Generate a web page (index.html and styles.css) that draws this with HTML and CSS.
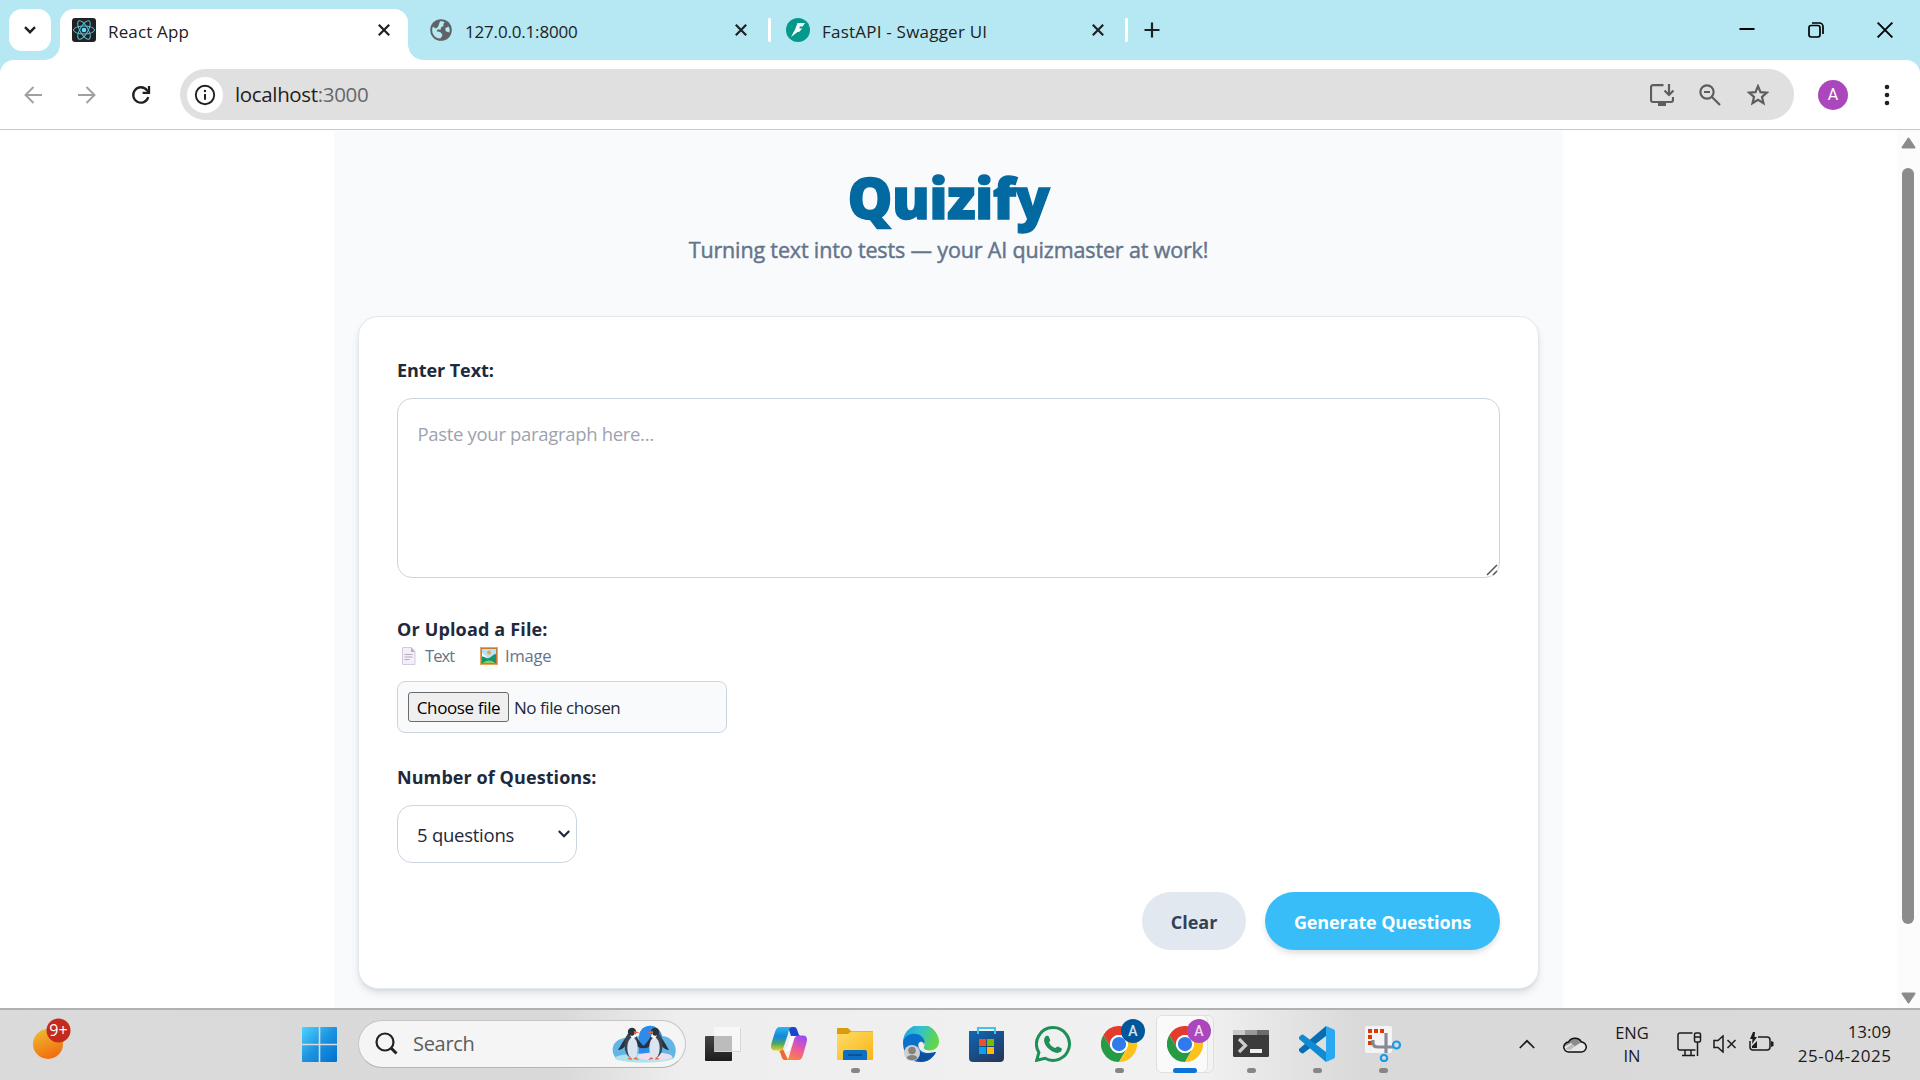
FILE: index.html
```html
<!DOCTYPE html>
<html lang="en">
<head>
<meta charset="utf-8">
<title>React App</title>
<link rel="stylesheet" href="styles.css">
</head>
<body>
<div class="screen">
  <header class="tabstrip">
    <button class="tab-search" aria-label="Search tabs"><svg width="12" height="8" viewBox="0 0 12 8"><path d="M1 1.2l5 5 5-5" fill="none" stroke="#1f2023" stroke-width="2.4"/></svg></button>
    <div class="tab tab-active">
      <svg class="fav" width="24" height="24" viewBox="0 0 24 24"><rect width="24" height="24" rx="3" fill="#222"/><g fill="none" stroke="#57c4dc" stroke-width="1"><ellipse cx="12" cy="12" rx="10.5" ry="4"/><ellipse cx="12" cy="12" rx="10.5" ry="4" transform="rotate(60 12 12)"/><ellipse cx="12" cy="12" rx="10.5" ry="4" transform="rotate(120 12 12)"/></g><circle cx="12" cy="12" r="2.3" fill="#61dafb"/></svg>
      <span class="tab-title"><span class="t t-react">React App</span></span>
      <svg class="x" width="12" height="12" viewBox="0 0 12 12"><path d="M.8.8l10.4 10.4M11.2.8L.8 11.2"/></svg>
    </div>
    <div class="tab tab-local">
      <svg class="fav" width="24" height="24" viewBox="0 0 24 24"><circle cx="12" cy="12" r="10.8" fill="#5f6368"/><path d="M11 3.2c2.2 0 3.6.4 4.6 1L14.4 6v2.3l-2.2.6-.4 2.5H8.6L7.5 13.3l3.6.7 2.3 2.4-.5 2.2-1.6 1.9C6 20.3 3.2 16.5 3.2 12c0-1.2.2-2.2.6-3.2l3.4 1.8 2-2.2z" fill="#b5e9f3"/><path d="M19.5 8.5l-3.3 1.8.5 3 3.6 1.3c.7-2.3.3-4.6-.8-6.1z" fill="#b5e9f3"/></svg>
      <span class="tab-title"><span class="t t-ip">127.0.0.1:8000</span></span>
      <svg class="x" width="12" height="12" viewBox="0 0 12 12"><path d="M.8.8l10.4 10.4M11.2.8L.8 11.2"/></svg>
    </div>
    <i class="tab-divider"></i>
    <div class="tab tab-fast">
      <svg class="fav" width="24" height="24" viewBox="0 0 24 24"><circle cx="12" cy="12" r="12" fill="#05998b"/><path d="M11.5 5H19l-2.4 3.6h-2.8l-.4 1.8h2.9l-3 3.4-1.8.2L5 19l4.3-8z" fill="#fff"/></svg>
      <span class="tab-title"><span class="t t-fast">FastAPI - Swagger UI</span></span>
      <svg class="x" width="12" height="12" viewBox="0 0 12 12"><path d="M.8.8l10.4 10.4M11.2.8L.8 11.2"/></svg>
    </div>
    <i class="tab-divider"></i>
    <svg class="plus" width="16" height="16" viewBox="0 0 16 16"><path d="M8 .5v15M.5 8h15" stroke="#1f2023" stroke-width="2.2"/></svg>
    <div class="window-controls">
      <svg width="16" height="16" viewBox="0 0 16 16"><path d="M.5 7h15" stroke="#000" stroke-width="2"/></svg>
      <svg width="16" height="16" viewBox="0 0 16 16"><g fill="none" stroke="#000" stroke-width="1.7"><rect x="1" y="3.5" width="11" height="11.5" rx="2.2"/><path d="M4 1h7.300a3.700 3.700 0 0 1 3.700 3.700V12"/></g></svg>
      <svg width="16" height="16" viewBox="0 0 16 16"><path d="M.6.6l14.8 14.8M15.4.6L.6 15.4" stroke="#000" stroke-width="1.9"/></svg>
    </div>
  </header>

  <nav class="toolbar">
    <svg width="18" height="18" viewBox="0 0 18 18"><path d="M18 9H1.5M9.5 1L1.5 9l8 8" fill="none" stroke="#a0a0a0" stroke-width="1.9"/></svg>
    <svg width="18" height="18" viewBox="0 0 18 18"><path d="M0 9h16.5M8.5 1l8 8-8 8" fill="none" stroke="#a0a0a0" stroke-width="1.9"/></svg>
    <svg width="20" height="20" viewBox="0 0 20 20"><path d="M17.3 12.2A7.700 7.700 0 1 1 16 5.200l1.800 1.800" fill="none" stroke="#1f2023" stroke-width="2.3"/><path d="M11.6 7.900H18V1" fill="none" stroke="#1f2023" stroke-width="2.3"/></svg>
    <div class="omnibox">
      <span class="site-info"><svg width="22" height="22" viewBox="0 0 22 22"><circle cx="11" cy="11" r="9.200" fill="none" stroke="#1f2023" stroke-width="1.900"/><path d="M11 10v5.800" stroke="#1f2023" stroke-width="2"/><circle cx="11" cy="7" r="1.200" fill="#1f2023"/></svg></span>
      <span class="url"><span class="t t-url">localhost<span class="port">:3000</span></span></span>
      <svg width="24" height="22" viewBox="0 0 24 22"><g fill="none" stroke="#5b5d5f" stroke-width="2.2"><path d="M13.5 1.100H3a2 2 0 0 0-2 2v12.900a2 2 0 0 0 2 2h18a2 2 0 0 0 2-2v-3"/><path d="M19 0v11M14.500 6.500L19 11l4.500-4.500"/></g><path d="M8 18h8v4H8z" fill="#5b5d5f"/></svg>
      <svg width="22" height="22" viewBox="0 0 22 22"><g fill="none" stroke="#5b5d5f" stroke-width="2.2"><circle cx="8" cy="8" r="6.600"/><path d="M13 13l8 8M5 8h6"/></g></svg>
      <svg width="22" height="22" viewBox="0 0 22 22"><path d="M11 2.200l2.500 6 6.400.5-4.900 4.200 1.500 6.300-5.500-3.400-5.500 3.400L7 12.900 2.100 8.700l6.400-.5z" fill="none" stroke="#5b5d5f" stroke-width="2.200"/></svg>
    </div>
    <span class="avatar">A</span>
    <svg width="6" height="22" viewBox="0 0 6 22"><g fill="#1f2023"><circle cx="3" cy="3" r="2.300"/><circle cx="3" cy="11" r="2.300"/><circle cx="3" cy="19" r="2.300"/></g></svg>
  </nav>

  <div class="viewport">
    <main class="app">
      <h1><span class="t t-h1">Quizify</span></h1>
      <p class="tagline"><span class="t t-tag">Turning text into tests — your AI quizmaster at work!</span></p>
      <form class="card">
        <label class="lbl"><span class="t t-l1">Enter Text:</span></label>
        <div class="area">
          <textarea placeholder="Paste your paragraph here..."></textarea>
          <svg class="grip" width="12" height="12" viewBox="0 0 12 12"><path d="M1 11L11 1M7 11l4-4" stroke="#555" stroke-width="1.500"/></svg>
        </div>
        <label class="lbl lbl-file"><span class="t t-l2">Or Upload a File:</span></label>
        <div class="hints">
          <svg width="15" height="18" viewBox="0 0 15 18"><path d="M1.500.5h9L14 4.500v13H1.500z" fill="#f3eef8" stroke="#d3cbdc"/><path d="M10 .5v4.500h4z" fill="#b9aec6"/><path d="M3.500 7.500h8M3.500 10h8M3.500 12.500h5" stroke="#b5abc1"/></svg>
          <span class="t t-text">Text</span>
          <svg class="pic" width="18" height="18" viewBox="0 0 18 18"><path d="M0 0h18v18H0z" fill="#eba55c"/><path d="M1 1h16v16H1z" fill="#c57a35"/><path d="M2 2h14v14H2z" fill="#b7e1fb"/><circle cx="9" cy="5.500" r="2" fill="#f4a62a"/><path d="M2 6l4 3 2 4H2z" fill="#f5fbff"/><path d="M2 9.500c3 0 4 2.500 7 1.500s4-4 7-4v9H2z" fill="#15946f"/><path d="M3 16c3-3.500 9-3.500 12 0z" fill="#8fce52"/></svg>
          <span class="t t-image">Image</span>
        </div>
        <div class="file"><button type="button"><span class="t t-choose">Choose file</span></button><span class="t t-nofile">No file chosen</span></div>
        <label class="lbl lbl-num"><span class="t t-l3">Number of Questions:</span></label>
        <div class="select"><span class="t t-sel">5 questions</span><svg width="12" height="8" viewBox="0 0 12 8"><path d="M.8 1l5.200 5.200L11.200 1" fill="none" stroke="#1e293b" stroke-width="2.200"/></svg></div>
        <div class="actions">
          <button type="button" class="btn clear"><span class="t t-clear">Clear</span></button>
          <button type="button" class="btn generate"><span class="t t-gen">Generate Questions</span></button>
        </div>
      </form>
    </main>
    <div class="scrollbar">
      <svg width="15" height="12" viewBox="0 0 15 12"><path d="M7.500 1.500L13.500 10.500h-12z" fill="#8b8b8b" stroke="#8b8b8b" stroke-width="2" stroke-linejoin="round"/></svg>
      <i class="thumb"></i>
      <svg width="15" height="12" viewBox="0 0 15 12"><path d="M7.500 10.500L1.500 1.500h12z" fill="#8b8b8b" stroke="#8b8b8b" stroke-width="2" stroke-linejoin="round"/></svg>
    </div>
  </div>

  <footer class="taskbar">
    <div class="widget"><svg width="40" height="42" viewBox="0 0 40 42"><defs><linearGradient id="sun" x1=".2" y1="0" x2=".6" y2="1"><stop offset="0" stop-color="#eebb31"/><stop offset="1" stop-color="#f26b0c"/></linearGradient></defs><circle cx="16" cy="26" r="15" fill="url(#sun)"/><circle cx="26.500" cy="12.500" r="12" fill="#c42b1c"/></svg><b class="badge">9+</b></div>
    <svg class="start" width="35" height="35" viewBox="0 0 35 35"><defs><linearGradient id="win" gradientUnits="userSpaceOnUse" x1="0" y1="0" x2="35" y2="35"><stop offset="0" stop-color="#4fd3ff"/><stop offset=".5" stop-color="#1c93e0"/><stop offset="1" stop-color="#0070d0"/></linearGradient></defs><path d="M1 0h15.700v16.700H0V1a1 1 0 0 1 1-1zM18.300 0H34a1 1 0 0 1 1 1v15.700H18.300zM0 18.300h16.700V35H1a1 1 0 0 1-1-1zM18.300 18.300H35V34a1 1 0 0 1-1 1H18.300z" fill="url(#win)"/></svg>
    <div class="search">
      <svg width="24" height="24" viewBox="0 0 24 24"><circle cx="11" cy="10" r="8.500" fill="none" stroke="#222" stroke-width="2.200"/><path d="M17 16l5.500 5.500" stroke="#222" stroke-width="3"/></svg>
      <span class="t t-search">Search</span>
      <svg class="penguins" width="64" height="38" viewBox="0 0 64 38"><path d="M5 34C-3 27 1 16 9 14c7-3 13-1 18-3C29-2 46-3 50 11c13 1 17 15 11 23z" fill="#62b5e4"/><path d="M27 11C29-2 46-3 50 11v20H27z" fill="#2f8be8"/><ellipse cx="32" cy="33" rx="29" ry="4.500" fill="#aee3ee"/><ellipse cx="43" cy="31.500" rx="17" ry="4" fill="#eedff0"/>
        <g><path d="M15 11c-4 5-6 9-9 14 4 0 7-3 9-7z" fill="#29323f"/><path d="M24 11c3 5 5 8 9 11-4 3-8 0-10-5z" fill="#29323f"/><ellipse cx="19" cy="20" rx="6.500" ry="12.500" fill="#3a4452"/><ellipse cx="20.500" cy="23" rx="5.200" ry="10.500" fill="#dbe5f1"/><circle cx="20" cy="7" r="4.200" fill="#29323f"/><path d="M18 10c3 2 4 0 5-2l1 4-4 2z" fill="#fff"/><path d="M22 6l6 1.500-6 1z" fill="#ef6a3a"/><path d="M15 34l4-2 1 3zM21 34l3-2 3 3z" fill="#ef6a3a"/></g>
        <g transform="translate(63 0) scale(-1 1)"><path d="M15 11c-4 5-6 9-9 14 4 0 7-3 9-7z" fill="#29323f"/><path d="M24 11c3 5 5 8 9 11-4 3-8 0-10-5z" fill="#29323f"/><ellipse cx="19" cy="20" rx="6.500" ry="12.500" fill="#3a4452"/><ellipse cx="20.500" cy="23" rx="5.200" ry="10.500" fill="#dbe5f1"/><circle cx="20" cy="7" r="4.200" fill="#29323f"/><path d="M18 10c3 2 4 0 5-2l1 4-4 2z" fill="#fff"/><path d="M22 6l6 1.500-6 1z" fill="#ef6a3a"/><path d="M15 34l4-2 1 3zM21 34l3-2 3 3z" fill="#ef6a3a"/></g></svg>
    </div>
    <div class="apps">
      <div class="appicon"><svg viewBox="0 0 36 36"><defs><linearGradient id="tv" x1="0" y1="0" x2="0" y2="1"><stop offset="0" stop-color="#454545"/><stop offset="1" stop-color="#1d1d1d"/></linearGradient></defs><rect y="10" width="27" height="25" rx="1" fill="url(#tv)"/><path d="M9 10V2a1 1 0 0 1 1-1h25a1 1 0 0 1 1 1v23a1 1 0 0 1-1 1h-8V10z" fill="#f7f7f7"/><path d="M9 10h18v16H9z" fill="#bcbcbc"/><path d="M10 25.500h25.500V2" fill="none" stroke="#d6d6d6"/></svg></div>
      <div class="appicon"><svg viewBox="0 0 36 36"><defs><linearGradient id="c1" x1="0" y1="0" x2="0" y2="1"><stop offset="0" stop-color="#2cb6ee"/><stop offset=".4" stop-color="#1487dd"/><stop offset=".7" stop-color="#45a66c"/><stop offset="1" stop-color="#f1cd1b"/></linearGradient><linearGradient id="c2" x1=".6" y1="0" x2=".2" y2="1"><stop offset="0" stop-color="#a34bf0"/><stop offset=".5" stop-color="#ee5a9a"/><stop offset="1" stop-color="#fb8a35"/></linearGradient></defs><path d="M9 25l3-2 5 11h-3c-4 0-3-6-6-9z" fill="#f2672e"/><path d="M17 1h6c4 0 3 6 6 9h-9z" fill="#1c46c9"/><path d="M9 1h13c-4 0-4 3-5 7l-4 12c-1 4-3 4.500-5 4.500H4c-4 0-5-3-3-9L4 6c1-3 2-5 5-5z" fill="url(#c1)"/><path d="M27 34H14c4 0 4-3 5-7l4-13c1-4 3-4.500 5-4.500h4c4 0 5 3 3 9l-3 10.500c-1 3-2 5-5 5z" fill="url(#c2)"/><path d="M20 10h6c-2 0-3 1-4 4l-3 9c-1 2-2 2.500-5 2.500 2-2 3-7 6-15.500z" fill="#fff"/></svg></div>
      <div class="appicon"><svg viewBox="0 0 36 36"><defs><linearGradient id="fd" x1="0" y1="0" x2="1" y2="1"><stop offset="0" stop-color="#ffdc6a"/><stop offset="1" stop-color="#f8b512"/></linearGradient></defs><path d="M0 10V3a1 1 0 0 1 1-1h9c2 0 3 3 5 3h20a1 1 0 0 1 1 1v10H0z" fill="#dc9b0a"/><path d="M0 8h11l3-2.500h22V34H0z" fill="url(#fd)"/><path d="M6 34V26a2 2 0 0 1 2-2h20a2 2 0 0 1 2 2v8z" fill="#0d6fc4"/><path d="M11 29h14" stroke="#0a4a86" stroke-width="1.500"/></svg><i class="dot"></i></div>
      <div class="appicon"><svg viewBox="0 0 36 36"><defs><linearGradient id="e1" x1="0" y1="0" x2="1" y2=".3"><stop offset="0" stop-color="#1e9fdc"/><stop offset=".5" stop-color="#30c2cf"/><stop offset="1" stop-color="#62d64a"/></linearGradient></defs><path d="M0 18a18 18 0 0 1 36-3c0 6-4 9.500-9 9.500-4 0-7-1.500-6-4 2-3 0-7-4-8z" fill="url(#e1)"/><path d="M0 17C1 7 13 6 18 10c4 3 4 7 3 9 0-2-2-4-4-3-3 1-2 8 3 10 5 2 10 0 13 0-3 6-9 10-16 10C7 36 0 28 0 17z" fill="#0b70cc"/><path d="M13 18c-1 8 8 12 20 8-3 6-8 10-15 10-9-2-11-12-5-18z" fill="#0d509d"/><circle cx="9" cy="27" r="8" fill="#d2d0ce"/><circle cx="9" cy="24.500" r="3.800" fill="#86827e"/><path d="M3.500 32c1-4 10-4 11 0a8 8 0 0 1-11 0z" fill="#86827e"/></svg></div>
      <div class="appicon"><svg viewBox="0 0 36 36"><defs><linearGradient id="st" x1="0" y1="0" x2=".7" y2="1"><stop offset="0" stop-color="#0e67b5"/><stop offset="1" stop-color="#243a63"/></linearGradient></defs><path d="M0 5h35v27a4 4 0 0 1-4 4H4a4 4 0 0 1-4-4z" fill="url(#st)"/><path d="M9 8V2h17v6" fill="none" stroke="#3cc4f7" stroke-width="2"/><path d="M10 13h7v7h-7z" fill="#f25022"/><path d="M18 13h7v7h-7z" fill="#7fba00"/><path d="M10 21h7v7h-7z" fill="#00a4ef"/><path d="M18 21h7v7h-7z" fill="#ffb900"/></svg></div>
      <div class="appicon"><svg viewBox="0 0 36 36"><path d="M18 1.600A16.400 16.400 0 1 1 10 32.300L1.700 34.300 3.900 26.500A16.400 16.400 0 0 1 18 1.600z" fill="none" stroke="#1f8f58" stroke-width="3"/><path d="M10 11c1.500-2 3.500-1.500 4 0l1.200 3c.3 1-.9 1.700-1.200 2.500 1.500 3 3.500 4.500 6.300 5.600.8-.3 1.600-1.900 2.500-1.600l3.700 1.800c1 .6 0 3-1.200 3.800-3.300 2-8 0-11.300-3-4-3.500-6.300-8.500-4-12.100z" fill="#1f8f58"/></svg></div>
      <div class="appicon"><svg viewBox="0 0 48 48"><path d="M24 12h20.800A24 24 0 0 0 3.200 12l10.400 18A12 12 0 0 1 24 12z" fill="#e33b2e"/><path d="M13.600 30L3.200 12A24 24 0 0 0 24 48l10.400-18a12 12 0 0 1-20.800 0z" fill="#269a45"/><path d="M34.400 30L24 48a24 24 0 0 0 20.800-36H24a12 12 0 0 1 10.400 18z" fill="#fcc21b"/><circle cx="24" cy="24" r="12" fill="#fff"/><circle cx="24" cy="24" r="9.500" fill="#2f7bee"/></svg><b class="profile blue">A</b><i class="dot"></i></div>
      <div class="appicon current"><i class="tile back"></i><i class="tile"></i><svg viewBox="0 0 48 48"><path d="M24 12h20.800A24 24 0 0 0 3.200 12l10.400 18A12 12 0 0 1 24 12z" fill="#e33b2e"/><path d="M13.600 30L3.200 12A24 24 0 0 0 24 48l10.400-18a12 12 0 0 1-20.800 0z" fill="#269a45"/><path d="M34.400 30L24 48a24 24 0 0 0 20.800-36H24a12 12 0 0 1 10.400 18z" fill="#fcc21b"/><circle cx="24" cy="24" r="12" fill="#fff"/><circle cx="24" cy="24" r="9.500" fill="#2f7bee"/></svg><b class="profile purple">A</b><i class="dot wide"></i></div>
      <div class="appicon"><svg viewBox="0 0 36 36"><rect y="4" width="36" height="27" rx="1.500" fill="#3b3b3b"/><path d="M1 4h11v5H0V5a1 1 0 0 1 1-1z" fill="#c9c9c9"/><path d="M12 4h12v5H12z" fill="#999"/><path d="M24 4h11a1 1 0 0 1 1 1v4H24z" fill="#6b6b6b"/><path d="M6 13l6.500 6.500L6 26" fill="none" stroke="#ccc" stroke-width="3.200"/><path d="M17 23h12v4H17z" fill="#eee"/></svg><i class="dot"></i></div>
      <div class="appicon"><svg viewBox="0 0 36 36"><path d="M27 0v10L4 27.500l-1.500-.3L0 25v-2z" fill="#0a6cb3"/><path d="M27 36V26L4 8.500l-1.500.3L0 11v2z" fill="#118ad4"/><path d="M27 0l8 3.500 1 1.500v26l-1 1.500-8 3.500z" fill="#28a9f1"/></svg><i class="dot"></i></div>
      <div class="appicon"><svg viewBox="0 0 36 36"><rect width="27" height="27" rx="2" fill="#f4f4f6"/><path d="M3 3h4v4H3zM9 3h4v4H9zM15 3h4v4h-4zM3 9h4v4H3zM3 15h4v4H3z" fill="#d83b01"/><path d="M21 7v20M8 14v3q0 4 5 4h15" fill="none" stroke="#858b95" stroke-width="3.200"/><circle cx="31.500" cy="19" r="3.500" fill="none" stroke="#1b9ae8" stroke-width="2.200"/><circle cx="19" cy="32" r="3.200" fill="none" stroke="#1b9ae8" stroke-width="2.200"/></svg><i class="dot"></i></div>
    </div>
    <div class="tray">
      <svg class="up" width="16" height="10" viewBox="0 0 16 10"><path d="M.8 9L8 1.800 15.200 9" fill="none" stroke="#1b1b1b" stroke-width="1.700"/></svg>
      <svg class="cloud" width="24" height="17" viewBox="0 0 24 17"><path d="M6 16a5 5 0 0 1-.5-10A7.500 7.500 0 0 1 18.500 6a5 5 0 0 1-.5 10z" fill="#e7e7e7"/><path d="M2 13L9 8l5 1-7 5z" fill="#bbb"/><path d="M5.500 6A7.500 7.500 0 0 1 19 6l-7 4-4-3-7 4q0-4 4.500-5z" fill="#8b8b8b"/><path d="M6 16a5 5 0 0 1-.5-10A7.500 7.500 0 0 1 18.500 6a5 5 0 0 1-.5 10z" fill="none" stroke="#111" stroke-width="1.500"/></svg>
      <div class="lang"><span class="t t-eng">ENG</span><span class="t t-in">IN</span></div>
      <svg class="net" width="25" height="25" viewBox="0 0 25 25"><g fill="none" stroke="#1b1b1b" stroke-width="1.500"><path d="M15.500 1H3a2 2 0 0 0-2 2v13a2 2 0 0 0 2 2h15.500M8 18.500V23M14 18.500V23M5 23.500h13"/><rect x="17.500" y="1" width="6" height="9" rx="1.500"/><path d="M18 5h5M20.500 10v14"/></g></svg>
      <svg class="vol" width="24" height="18" viewBox="0 0 24 18"><g fill="none" stroke="#1b1b1b" stroke-width="1.500"><path d="M1 5.500h4L10 1v16l-5-4.500H1z"/><path d="M14.500 5l8 8M22.500 5l-8 8"/></g></svg>
      <svg class="bat" width="25" height="20" viewBox="0 0 25 20"><g fill="none" stroke="#1b1b1b" stroke-width="1.500"><path d="M9 5h9a3 3 0 0 1 3 3v7a3 3 0 0 1-3 3H4a3 3 0 0 1-3-3V9"/></g><path d="M22 9l2.500 1v4L22 15z" fill="#1b1b1b"/><path d="M4 0L1 7h2.500L3 12l5-7H5.500L6 0zM3 16v-2l5-5v7z" fill="#1b1b1b"/></svg>
      <div class="clock"><span class="t t-time">13:09</span><span class="t t-date">25-04-2025</span></div>
    </div>
  </footer>
</div>
</body>
</html>
```
FILE: styles.css
```css
* { box-sizing: border-box; }
body {
  margin: 0;
  font-family: "Open Sans", "Noto Sans", sans-serif;
  color: #1f2023;
}
svg { display: block; flex: none; }
.t { display: inline-block; white-space: nowrap; }
button { font: inherit; margin: 0; }

.screen {
  width: 1920px;
  height: 1080px;
  overflow: hidden;
  display: flex;
  flex-direction: column;
  background: #b5e8f2;
}

/* Tab strip */
.tabstrip {
  height: 60px;
  flex: none;
  display: flex;
  align-items: center;
  padding-left: 9px;
}
.tab-search {
  width: 42px;
  height: 42px;
  border: 0;
  border-radius: 13px;
  background: #fff;
  display: grid;
  place-items: center;
  padding: 0;
}
.tab {
  display: flex;
  align-items: center;
  padding: 0 18px 0 12px;
  height: 42px;
}
.tab-title { flex: 1; margin-left: 12px; font-size: 17px; line-height: 24px; padding-top: 3px; }
.t-react { letter-spacing: .15px; }
.t-ip { letter-spacing: -.18px; }
.t-fast { letter-spacing: .22px; }
.tab-active {
  width: 348px;
  height: 51px;
  margin-left: 9px;
  align-self: flex-end;
  background: #fff;
  border-radius: 14px 14px 0 0;
  position: relative;
  padding-bottom: 9px;
}
.tab-active::before,
.tab-active::after {
  content: "";
  position: absolute;
  bottom: 0;
  width: 15px;
  height: 15px;
}
.tab-active::before { left: -15px; background: radial-gradient(circle at 0 0, transparent 14.5px, #fff 15px); }
.tab-active::after { right: -15px; background: radial-gradient(circle at 100% 0, transparent 14.5px, #fff 15px); }
.tab-local { width: 360px; padding-left: 21px; padding-right: 21px; }
.tab-fast { width: 354px; padding: 0 21px 0 15px; }
.x { stroke: #1f2023; stroke-width: 2.2; }
.tab-divider { width: 3px; height: 24px; background: #fff; border-radius: 1px; }
.plus { margin-left: 16px; }
.window-controls { margin-left: auto; margin-right: 27px; display: flex; gap: 53px; }

/* Toolbar */
.toolbar {
  height: 71px;
  flex: none;
  display: flex;
  align-items: center;
  background: #fff;
  border-radius: 14px 14px 0 0;
  padding: 0 30px 2px 24px;
  box-shadow: inset 0 -1px #fcfcfc, inset 0 -2px #c6c8c9;
}
.toolbar > svg:nth-child(2) { margin-left: 36px; }
.toolbar > svg:nth-child(3) { margin-left: 35px; }
.omnibox {
  width: 1614px;
  height: 51px;
  margin-left: 29px;
  border-radius: 26px;
  background: #e0e0e0;
  display: flex;
  align-items: center;
  padding: 0 25px 0 7px;
}
.site-info {
  width: 36px;
  height: 36px;
  border-radius: 50%;
  background: #fff;
  display: grid;
  place-items: center;
}
.url { flex: 1; margin-left: 12px; font-size: 20.5px; line-height: 30px; padding-bottom: 2px; }
.t-url { letter-spacing: -.35px; }
.port { color: #66686b; }
.omnibox > svg { margin-left: 26px; }
.omnibox > svg:nth-last-child(2) { margin-left: 25px; }
.avatar {
  width: 30px;
  height: 30px;
  margin-left: 24px;
  border-radius: 50%;
  background: #ab47bc;
  color: #fff;
  font: 16px/30px Roboto, sans-serif;
  text-align: center;
}
.avatar + svg { margin-left: auto; }

/* Page */
.viewport {
  flex: 1;
  min-height: 0;
  display: flex;
  background: #fff;
  overflow: hidden;
}
.app {
  width: 1229px;
  margin-left: 334px;
  padding: 37px 24px 0;
  background: #f8fafc;
}
h1 {
  margin: 0;
  text-align: center;
  font-size: 56.5px;
  line-height: 60px;
  font-weight: 800;
  color: #0369a1;
}
.t-h1 { letter-spacing: -.6px; -webkit-text-stroke: 1.3px #0369a1; }
.tagline {
  margin: 6px 0 50px;
  text-align: center;
  font-size: 21.5px;
  line-height: 32px;
  color: #64748b;
}
.t-tag { letter-spacing: -.15px; -webkit-text-stroke: .45px #64748b; }
.card {
  height: 673px;
  padding: 39px 38px 0 38px;
  border: 1px solid #e2e8f0;
  border-radius: 20px;
  background: #fff;
  box-shadow: 0 5px 8px -1px rgba(0, 0, 0, .1), 0 2px 5px -2px rgba(0, 0, 0, .1);
}
.lbl {
  display: block;
  font-size: 18px;
  line-height: 28px;
  font-weight: 700;
  color: #1e293b;
}
.t-l1 { letter-spacing: -.08px; }
.t-l2 { letter-spacing: .16px; }
.t-l3 { letter-spacing: .08px; }
.area { position: relative; height: 180px; margin-top: 14px; }
textarea {
  display: block;
  width: 100%;
  height: 100%;
  resize: none;
  border: 1px solid #cbd5e1;
  border-radius: 15px;
  background: #fff;
  padding: 20px 19.5px;
  font: 18.5px/30px "Open Sans", sans-serif;
  letter-spacing: -.32px;
}
textarea::placeholder { color: #9ca3af; opacity: 1; }
.grip { position: absolute; right: 2px; bottom: 2px; }
.lbl-file { margin-top: 37px; }
.hints {
  display: flex;
  align-items: center;
  height: 26px;
  padding-left: 4px;
  font-size: 16.5px;
  line-height: 26px;
  color: #64748b;
}
.t-text { width: 29px; margin-left: 9px; letter-spacing: -.9px; }
.t-image { margin-left: 7px; letter-spacing: -.2px; }
.pic { margin-left: 26px; }
.file {
  width: 330px;
  height: 52px;
  margin-top: 12px;
  padding: 0 10px;
  display: flex;
  align-items: center;
  border: 1px solid #cbd5e1;
  border-radius: 8px;
  background: #f8fafc;
  font-size: 17px;
  color: #1e293b;
}
.file button {
  width: 101px;
  height: 30px;
  padding: 1px 0 0;
  margin-right: 5px;
  border: 1px solid #6b6b6b;
  border-radius: 3px;
  background: #efefef;
  color: #000;
  line-height: 28px;
}
.t-choose { letter-spacing: -.36px; }
.t-nofile { letter-spacing: -.45px; }
.lbl-num { margin-top: 30px; }
.select {
  width: 180px;
  height: 58px;
  margin-top: 14px;
  padding: 0 6px 0 19px;
  display: flex;
  align-items: center;
  justify-content: space-between;
  border: 1px solid #cbd5e1;
  border-radius: 15px;
  font-size: 18.5px;
  color: #1e293b;
}
.t-sel { letter-spacing: -.25px; }
.actions { display: flex; justify-content: flex-end; gap: 19px; margin-top: 29px; }
.btn {
  height: 58px;
  border: 0;
  border-radius: 29px;
  padding: 2px 0 0;
  font-size: 18px;
  font-weight: 700;
}
.clear { width: 104px; background: #e2e8f0; color: #334155; }
.generate { width: 235px; background: #38bdf8; color: #fff; box-shadow: 0 4px 6px -1px rgba(0, 0, 0, .14); }
.t-gen { letter-spacing: -.12px; }
.scrollbar {
  width: 23px;
  margin-left: auto;
  padding: 6px 1px 4px 0;
  background: #fcfcfc;
  display: flex;
  flex-direction: column;
  align-items: center;
}
.thumb { width: 12px; height: 756px; margin: 19px 0 auto; border-radius: 6px; background: #8b8b8b; }

/* Taskbar */
.taskbar {
  height: 72px;
  flex: none;
  display: flex;
  align-items: center;
  padding-bottom: 2px;
  border-top: 2px solid #b1b1b1;
  background: linear-gradient(90deg, #dadada 0, #d9d9d9 560px, #eee 680px, #f1f1f1 1200px, #d9d9d9 1360px, #dadada);
}
.widget { position: relative; margin-left: 32px; align-self: flex-start; padding-top: 8px; width: 40px; }
.badge {
  position: absolute;
  left: 14px;
  top: 9px;
  width: 25px;
  text-align: center;
  font: 500 16px/22px "Open Sans", sans-serif;
  color: #fff;
}
.start { margin-left: 230px; }
.search {
  width: 328px;
  height: 48px;
  margin-left: 21px;
  padding: 0 9px 0 15px;
  display: flex;
  align-items: center;
  border: 1.5px solid #c6c6c6;
  border-bottom-color: #b3b3b3;
  border-radius: 24px;
  background: #f5f5f5;
  font-size: 20px;
  line-height: 28px;
  color: #5c5c5c;
}
.t-search { margin-left: 15px; letter-spacing: -.3px; }
.penguins { margin-left: auto; }
.apps { display: flex; gap: 30px; margin-left: 19px; }
.appicon { position: relative; width: 36px; height: 36px; display: flex; }
.appicon svg { width: 36px; height: 36px; position: relative; }
.dot {
  position: absolute;
  left: 14px;
  top: 42px;
  width: 9px;
  height: 5px;
  border-radius: 3px;
  background: #868686;
}
.dot.wide { left: 6px; width: 24px; background: #0c74d4; }
.profile {
  position: absolute;
  left: 20px;
  top: -7px;
  width: 24px;
  height: 24px;
  border-radius: 50%;
  color: #d5e4f2;
  font: 500 14px/25px Roboto, sans-serif;
  text-align: center;
}
.blue { background: #01579b; }
.purple { background: #ab47bc; color: #f0d8f4; }
.tile {
  position: absolute;
  left: -11px;
  top: -11px;
  width: 52px;
  height: 58px;
  border: 1px solid #e0e0e0;
  border-radius: 6px;
  background: #fafafa;
}
.tile.back { left: -5px; background: #f3f3f3; }
.tray { flex: 1; display: flex; align-items: center; height: 100%; padding-right: 29px; }
.up { margin-left: 118px; }
.cloud { margin-left: 28px; }
.lang { display: flex; flex-direction: column; align-items: center; width: 34px; margin-left: 28px; font-size: 16.5px; line-height: 23px; color: #1b1b1b; }
.net { margin-left: 28px; }
.vol { margin-left: 11px; }
.bat { margin-left: 12px; margin-top: -4px; }
.clock { margin-left: auto; display: flex; flex-direction: column; align-items: flex-end; font-size: 17px; line-height: 24px; color: #1b1b1b; padding-bottom: 1px; }
.t-date { letter-spacing: .5px; margin-right: -.5px; }
```
